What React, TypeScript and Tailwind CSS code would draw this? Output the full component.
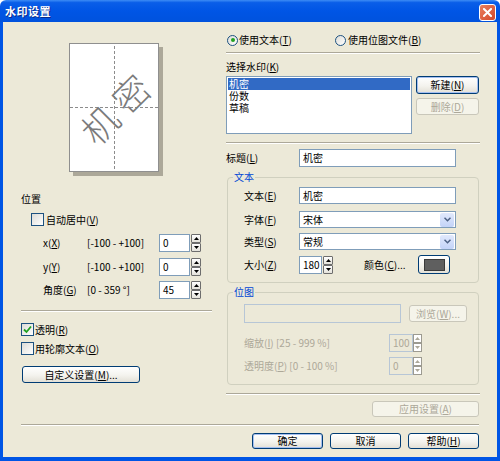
import React from "react";

// mnemonic letter, underlined like a Windows accelerator key
function K({ c }: { c: string }) {
  return <span className="underline underline-offset-[1px]">{c}</span>;
}

function Sep({ className = "" }: { className?: string }) {
  return <div className={"h-[2px] border-t border-[#aca899] border-b border-b-white " + className} />;
}

function Btn({
  children,
  className = "",
  def,
  disabled,
}: {
  children: React.ReactNode;
  className?: string;
  def?: boolean;
  disabled?: boolean;
}) {
  if (disabled) {
    return (
      <div className={"flex items-center justify-center rounded-[3px] border border-[#c9c7ba] bg-[#f5f4ea] text-[#aca899] " + className}>
        {children}
      </div>
    );
  }
  return (
    <div
      className={
        "flex items-center justify-center rounded-[3px] border border-[#003c74] bg-[linear-gradient(to_bottom,#ffffff,#f4f3ee_55%,#e3e0d6)] text-black " +
        (def ? "shadow-[inset_0_0_0_1px_#a5bff0] " : "") +
        className
      }
    >
      {children}
    </div>
  );
}

function Check({ checked }: { checked?: boolean }) {
  return (
    <div className="w-[13px] h-[13px] shrink-0 border border-[#1c5180] bg-[linear-gradient(135deg,#dcdcd7,#ffffff)] flex items-center justify-center">
      {checked && (
        <svg width="9" height="9" viewBox="0 0 9 9">
          <path d="M1 4.5 L3.5 7 L8 1.5" fill="none" stroke="#21a121" strokeWidth="1.8" />
        </svg>
      )}
    </div>
  );
}

function Radio({ checked }: { checked?: boolean }) {
  return (
    <div className="w-[11px] h-[11px] shrink-0 rounded-full border border-[#1c5180] bg-[linear-gradient(135deg,#dcdcd7,#ffffff)] flex items-center justify-center">
      {checked && <div className="w-[4px] h-[4px] rounded-full bg-[#21a121]" />}
    </div>
  );
}

function Input({ value, className = "", disabled }: { value?: string; className?: string; disabled?: boolean }) {
  return (
    <div
      className={
        "flex items-center border border-[#7f9db9] pl-[3px] " +
        (disabled ? "bg-[#ece9d8] text-[#aca899] border-[#b7c6d6] " : "bg-white text-black ") +
        className
      }
    >
      {value}
    </div>
  );
}

function Spin({ className = "", disabled }: { className?: string; disabled?: boolean }) {
  const half = disabled
    ? "flex-1 flex items-center justify-center border border-[#9c9a90] bg-white"
    : "flex-1 flex items-center justify-center border border-[#6d6d6d] rounded-[1px] bg-[linear-gradient(to_bottom,#ffffff,#e4e2da)]";
  const fill = disabled ? "#aca899" : "#000000";
  return (
    <div className={"flex flex-col gap-0 " + className}>
      <div className={half}>
        <svg width="5" height="3" viewBox="0 0 5 3">
          <path d="M0 3 L2.5 0 L5 3 Z" fill={fill} />
        </svg>
      </div>
      <div className={half}>
        <svg width="5" height="3" viewBox="0 0 5 3">
          <path d="M0 0 L2.5 3 L5 0 Z" fill={fill} />
        </svg>
      </div>
    </div>
  );
}

function Select({ value }: { value: string }) {
  return (
    <div className="w-[157px] h-[17px] flex items-center border border-[#7f9db9] bg-white pl-[3px] pr-[1px]">
      <span className="flex-1">{value}</span>
      <div className="w-[14px] h-[14px] rounded-[2px] bg-[linear-gradient(to_bottom,#e1e9fc,#c3d3f8)] flex items-center justify-center">
        <svg width="7" height="5" viewBox="0 0 7 5">
          <path d="M0.5 0.8 L3.5 3.8 L6.5 0.8" fill="none" stroke="#4d6185" strokeWidth="1.5" />
        </svg>
      </div>
    </div>
  );
}

function Group({ label, className = "", children }: { label: string; className?: string; children: React.ReactNode }) {
  return (
    <div className={"relative border border-[#d0d0bf] rounded-[4px] " + className}>
      <span className="absolute -top-[7px] left-[5px] px-[1px] bg-[#ece9d8] text-[#0046d5] leading-[12px]">{label}</span>
      {children}
    </div>
  );
}

export default function App() {
  return (
    <div className="w-[500px] h-[461px] bg-white font-['Noto_Sans_CJK_SC',sans-serif] text-[10px] leading-[12px] text-black">
      {/* title bar */}
      <div className="h-[22px] rounded-t-[6px] bg-[linear-gradient(to_bottom,#3d8cf5_0%,#0a5ee8_12%,#0055e5_50%,#0052dd_100%)] flex items-center justify-between pl-[5px] pr-[4px]">
        <span className="text-white text-[11px] font-bold tracking-[0.5px] [text-shadow:1px_1px_0_#0a2a8a]">水印设置</span>
        <div className="mt-[2px] w-[17px] h-[17px] rounded-[3px] border border-white bg-[linear-gradient(135deg,#e9805f,#d4482a)] flex items-center justify-center">
          <svg width="9" height="9" viewBox="0 0 9 9">
            <path d="M1 1 L8 8 M8 1 L1 8" stroke="white" strokeWidth="2" strokeLinecap="square" />
          </svg>
        </div>
      </div>

      {/* body */}
      <div className="h-[439px] bg-[#ece9d8] border-x-[3px] border-b-[4px] border-[#0055e5] pl-[18px] flex flex-col">
        <div className="flex">
          {/* left column */}
          <div className="w-[191px] flex flex-col">
            <div className="ml-[48px] mt-[21px] relative w-[90px] h-[129px] bg-white border border-[#8f8f8f] shadow-[4px_4px_0_#aca899]">
              <div className="absolute left-[44px] top-[2px] bottom-[2px] border-l border-dashed border-[#8c8c8c]" />
              <div className="absolute top-[63px] left-0 right-0 border-t border-dashed border-[#8c8c8c]" />
              <div className="absolute inset-0 flex items-center justify-center">
                <span className="-rotate-45 text-[36px] leading-[36px] font-light text-[#7b7b7b] tracking-[8px] pl-[8px] whitespace-nowrap">机密</span>
              </div>
            </div>

            <div className="mt-[21px] h-[12px]">位置</div>
            <div className="mt-[8px] ml-[10px] h-[13px] flex items-center gap-[2px]">
              <Check />
              <span>
                自动居中(<K c="V" />)
              </span>
            </div>

            <div className="mt-[8px] h-[18px] flex items-center">
              <span className="pl-[22px] w-[66px]">
                x(<K c="X" />)
              </span>
              <span className="w-[72px]">[-100 - +100]</span>
              <Input value="0" className="w-[31px] h-[18px]" />
              <Spin className="ml-[1px] w-[10px] h-[18px]" />
            </div>
            <div className="mt-[6px] h-[18px] flex items-center">
              <span className="pl-[22px] w-[66px]">
                y(<K c="Y" />)
              </span>
              <span className="w-[72px]">[-100 - +100]</span>
              <Input value="0" className="w-[31px] h-[18px]" />
              <Spin className="ml-[1px] w-[10px] h-[18px]" />
            </div>
            <div className="mt-[5px] h-[18px] flex items-center">
              <span className="pl-[22px] w-[66px]">
                角度(<K c="G" />)
              </span>
              <span className="w-[72px]">[0 - 359 °]</span>
              <Input value="45" className="w-[31px] h-[18px]" />
              <Spin className="ml-[1px] w-[10px] h-[18px]" />
            </div>

            <Sep className="mt-[11px]" />

            <div className="mt-[11px] h-[13px] flex items-center gap-[1px]">
              <Check checked />
              <span>
                透明(<K c="R" />)
              </span>
            </div>
            <div className="mt-[6px] h-[13px] flex items-center gap-[1px]">
              <Check />
              <span>
                用轮廓文本(<K c="O" />)
              </span>
            </div>
            <Btn className="mt-[11px] ml-[1px] w-[118px] h-[17px]">
              自定义设置(<K c="M" />)...
            </Btn>
          </div>

          {/* right column */}
          <div className="ml-[14px] w-[254px] flex flex-col">
            <div className="mt-[12px] h-[12px] flex items-center">
              <div className="ml-[1px] w-[108px] flex items-center gap-[1px]">
                <Radio checked />
                <span>
                  使用文本(<K c="T" />)
                </span>
              </div>
              <div className="flex items-center gap-[2px]">
                <Radio />
                <span>
                  使用位图文件(<K c="B" />)
                </span>
              </div>
            </div>

            <Sep className="mt-[6px]" />

            <div className="mt-[7px] h-[12px]">
              选择水印(<K c="K" />)
            </div>
            <div className="mt-[3px] flex">
              <div className="w-[186px] h-[58px] border border-[#7f9db9] bg-white p-[1px] flex flex-col">
                <div className="h-[12px] leading-[12px] bg-[#316ac5] text-white pl-[1px]">机密</div>
                <div className="h-[12px] leading-[12px] pl-[1px]">份数</div>
                <div className="h-[12px] leading-[12px] pl-[1px]">草稿</div>
              </div>
              <div className="ml-[4px] flex flex-col">
                <Btn def className="w-[63px] h-[18px]">
                  新建(<K c="N" />)
                </Btn>
                <Btn disabled className="mt-[4px] w-[63px] h-[17px]">
                  删除(<K c="D" />)
                </Btn>
              </div>
            </div>

            <Sep className="mt-[8px]" />

            <div className="mt-[5px] h-[18px] flex items-center">
              <span className="w-[73px]">
                标题(<K c="L" />)
              </span>
              <Input value="机密" className="w-[157px] h-[18px]" />
            </div>

            <Group label="文本" className="mt-[10px] ml-[1px] w-[252px] h-[106px] pt-[9px] pl-[16px] flex flex-col">
              <div className="h-[17px] flex items-center">
                <span className="w-[55px]">
                  文本(<K c="E" />)
                </span>
                <Input value="机密" className="w-[157px] h-[17px]" />
              </div>
              <div className="mt-[7px] h-[17px] flex items-center">
                <span className="w-[55px]">
                  字体(<K c="F" />)
                </span>
                <Select value="宋体" />
              </div>
              <div className="mt-[5px] h-[17px] flex items-center">
                <span className="w-[55px]">
                  类型(<K c="S" />)
                </span>
                <Select value="常规" />
              </div>
              <div className="mt-[5px] h-[19px] flex items-center">
                <span className="w-[55px]">
                  大小(<K c="Z" />)
                </span>
                <Input value="180" className="w-[23px] h-[18px]" />
                <Spin className="ml-[1px] w-[10px] h-[18px]" />
                <span className="ml-[31px] w-[54px]">
                  颜色(<K c="C" />)...
                </span>
                <Btn className="w-[32px] h-[19px]">
                  <div className="w-[21px] h-[12px] bg-[#5f5f5f] border border-[#3a3a3a]" />
                </Btn>
              </div>
            </Group>

            <Group label="位图" className="mt-[9px] ml-[1px] w-[252px] h-[93px] pt-[11px] pl-[16px] flex flex-col text-[#aca899]">
              <div className="h-[19px] flex items-center">
                <Input disabled className="w-[157px] h-[19px]" />
                <Btn disabled className="ml-[8px] w-[58px] h-[17px]">
                  浏览(<K c="W" />)...
                </Btn>
              </div>
              <div className="mt-[11px] h-[18px] flex items-center">
                <span className="w-[145px]">
                  缩放(<K c="I" />) [25 - 999 %]
                </span>
                <Input disabled value="100" className="w-[24px] h-[18px]" />
                <Spin disabled className="w-[9px] h-[18px]" />
              </div>
              <div className="mt-[5px] h-[18px] flex items-center">
                <span className="w-[145px]">
                  透明度(<K c="P" />) [0 - 100 %]
                </span>
                <Input disabled value="0" className="w-[24px] h-[18px]" />
                <Spin disabled className="w-[9px] h-[18px]" />
              </div>
            </Group>

            <Sep className="mt-[8px]" />

            <Btn disabled className="mt-[6px] ml-auto mr-[1px] w-[107px] h-[16px]">
              应用设置(<K c="A" />)
            </Btn>
          </div>
        </div>

        <Sep className="mt-[7px] w-[458px]" />

        <div className="mt-[7px] w-[458px] flex justify-end gap-[7px]">
          <Btn def className="w-[71px] h-[16px]">
            确定
          </Btn>
          <Btn className="w-[71px] h-[16px]">取消</Btn>
          <Btn className="w-[71px] h-[16px]">
            帮助(<K c="H" />)
          </Btn>
        </div>
      </div>
    </div>
  );
}
